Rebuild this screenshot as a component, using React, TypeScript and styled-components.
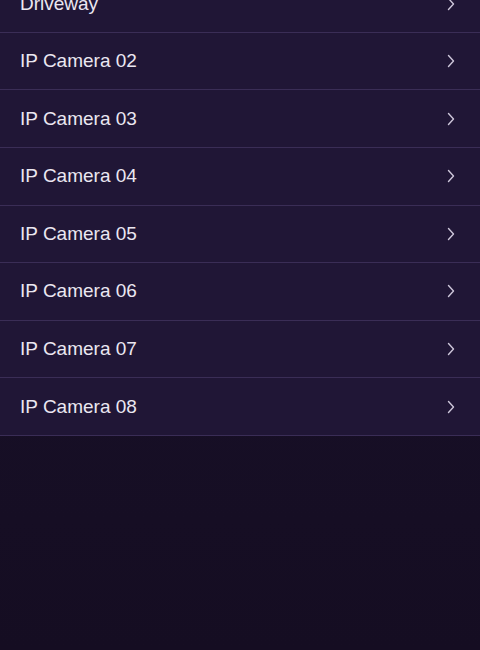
import React from 'react';
import styled, { createGlobalStyle } from 'styled-components';

const cameras = [
  'Driveway',
  'IP Camera 02',
  'IP Camera 03',
  'IP Camera 04',
  'IP Camera 05',
  'IP Camera 06',
  'IP Camera 07',
  'IP Camera 08',
];

export default function App() {
  return (
    <Screen>
      <GlobalStyle />
      <List>
        {cameras.map(name => (
          <Row key={name}>
            <Name>{name}</Name>
            <Chevron />
          </Row>
        ))}
      </List>
    </Screen>
  );
}

function Chevron() {
  return (
    <ChevronIcon width="8" height="14" viewBox="0 0 8 14" fill="none">
      <path
        d="M1.5 1.5 L6.5 7 L1.5 12.5"
        stroke="currentColor"
        strokeWidth="1.4"
        strokeLinecap="round"
        strokeLinejoin="round"
      />
    </ChevronIcon>
  );
}

const GlobalStyle = createGlobalStyle`
  html, body {
    margin: 0;
    padding: 0;
    background: #170f25;
  }
`;

const Screen = styled.div`
  width: 480px;
  height: 650px;
  overflow: hidden;
  background: linear-gradient(180deg, #1b1230 0%, #170f26 60%, #150d22 100%);
  font-family: 'Liberation Sans', Arial, sans-serif;
`;

const List = styled.ul`
  list-style: none;
  margin: -24.8px 0 0;
  padding: 0;
  background: #201636;
`;

const Row = styled.li`
  box-sizing: border-box;
  height: 57.6px;
  display: flex;
  align-items: center;
  justify-content: space-between;
  padding: 0 25px 0 20px;
  border-bottom: 1px solid #3a2d56;
`;

const Name = styled.span`
  font-size: 19px;
  color: #ebe7f1;
  letter-spacing: 0;
`;

const ChevronIcon = styled.svg`
  color: #cdc6da;
  display: block;
`;
